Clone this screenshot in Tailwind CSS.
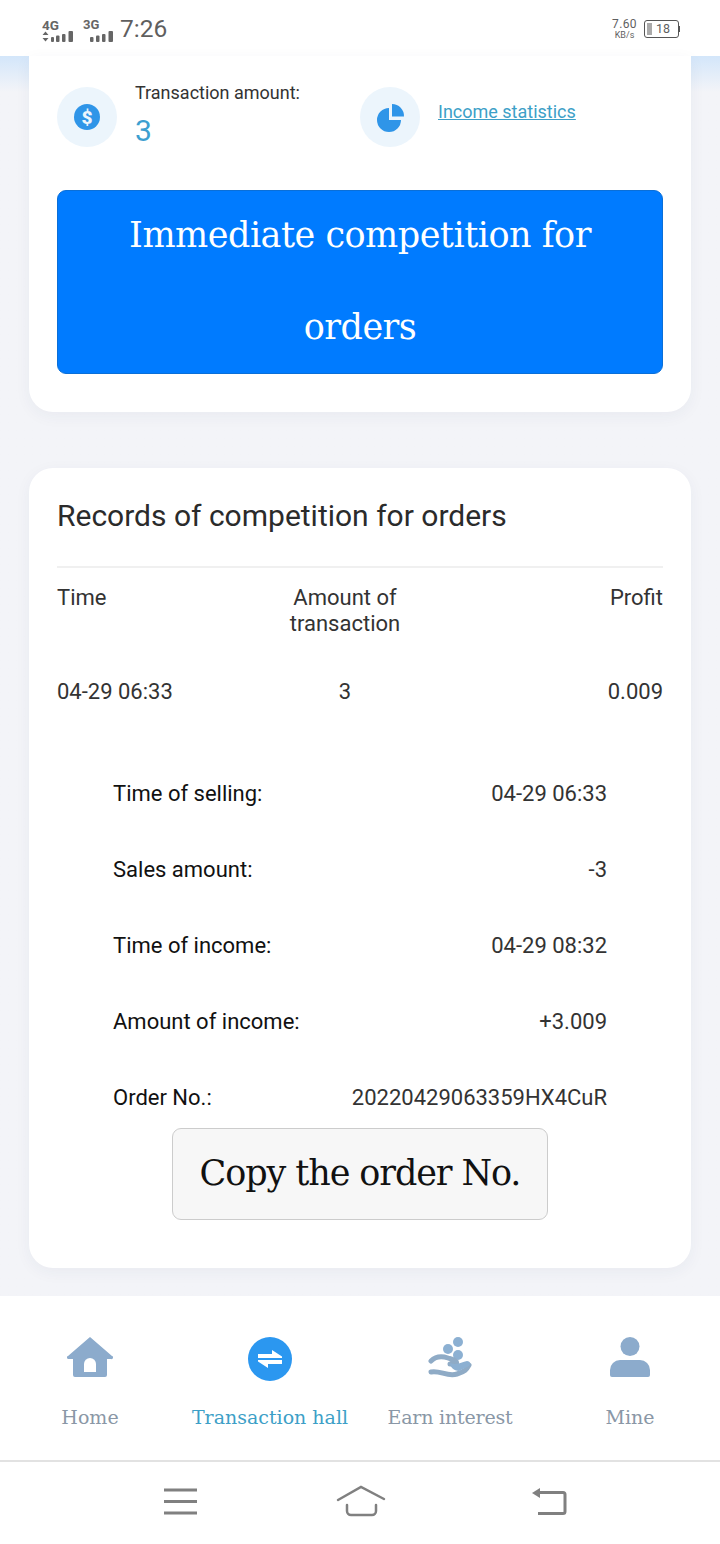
<!DOCTYPE html>
<html lang="en">
<head>
  <meta charset="UTF-8">
  <meta name="viewport" content="width=device-width, initial-scale=1.0">
  <title>Transaction hall</title>
  <script src="https://cdn.jsdelivr.net/npm/@tailwindcss/browser@4"></script>
</head>
<body class="w-[720px] h-[1544px] overflow-hidden bg-[#f3f4f8] font-['Roboto',sans-serif] text-[#222]">
  <!-- status bar -->
  <div class="h-[56px] bg-white flex items-center justify-between pl-[42px] pr-[40px] text-[#5f5f5f]">
    <div class="flex items-center">
      <svg width="32" height="32" viewBox="0 -8 32 32" fill="#666">
        <text x="0" y="10" font-size="13.500" font-weight="700" font-family="Roboto">4G</text>
        <path d="M3.500 11.500l3 3.500h-6zM3.500 21.500l3-3.500h-6z"/>
        <rect x="9" y="17" width="3" height="5" rx="1"/><rect x="14" y="15.500" width="3.500" height="6.500" rx="1"/><rect x="20" y="14" width="3.500" height="8" rx="1"/><rect x="26.500" y="11" width="4.500" height="11" rx="1"/>
      </svg>
      <svg width="32" height="32" viewBox="0 -8 32 32" fill="#666" class="ml-[8px]">
        <text x="1" y="9" font-size="13" font-weight="700" font-family="Roboto">3G</text>
        <rect x="8" y="17" width="3.500" height="5" rx="1"/><rect x="14" y="15.500" width="3.500" height="6.500" rx="1"/><rect x="20" y="14" width="3.500" height="8" rx="1"/><rect x="26.500" y="11" width="4.500" height="11" rx="1"/>
      </svg>
      <span class="text-[24.500px] leading-none ml-[6px] mt-[2px]">7:26</span>
    </div>
    <div class="flex items-center gap-[7px] mt-[2px]">
      <div class="flex flex-col items-center leading-none">
        <span class="text-[12px] tracking-[0.4px] leading-[12px]">7.60</span>
        <span class="text-[9px] leading-[9px] mt-[1px]">KB/s</span>
      </div>
      <div class="flex items-center">
        <div class="w-[35px] h-[18px] border-[1.5px] border-[#555] rounded-[3px] flex items-center text-[12.500px] pl-[2px] gap-[4px]">
          <span class="w-[5px] h-[12px] bg-[#aaa]"></span><span>18</span>
        </div>
        <span class="w-[1px] h-[6px] bg-[#555]"></span>
      </div>
    </div>
  </div>

  <main class="h-[1240px] px-[29px] bg-gradient-to-b from-[#d3e6fa] via-[#f3f4f8] via-[36px] to-[#f3f4f8]">
    <!-- summary card -->
    <section class="h-[356px] bg-white rounded-b-[24px] shadow-[0_4px_16px_rgba(40,60,100,0.05)] px-[28px] pt-[31px]">
      <div class="flex h-[60px]">
        <div class="w-[303px] flex gap-[18px]">
          <div class="w-[60px] h-[60px] rounded-full bg-[#ecf5fc] flex items-center justify-center">
            <svg width="26" height="26" viewBox="0 0 26 26">
              <circle cx="13" cy="13" r="13" fill="#2f95e8"/>
              <text x="13" y="20" text-anchor="middle" font-size="19" font-weight="900" fill="#ecf5fc" font-family="Roboto">$</text>
            </svg>
          </div>
          <div class="-mt-[7px]">
            <p class="text-[18px] leading-[26px] text-[#333]">Transaction amount:</p>
            <p class="text-[30px] leading-[36px] text-[#3d9fd0] mt-[7px]">3</p>
          </div>
        </div>
        <div class="flex gap-[18px] items-center">
          <div class="w-[60px] h-[60px] rounded-full bg-[#ecf5fc] flex items-center justify-center">
            <svg width="30" height="30" viewBox="0 0 30 30" fill="#2f95e8">
              <path d="M14 6a12 12 0 1 0 12 12H14z"/>
              <path d="M17 2a12 12 0 0 1 12 12.500H17z"/>
            </svg>
          </div>
          <a class="text-[18px] leading-[26px] underline text-[#3d9fc7] -mt-[11px]">Income statistics</a>
        </div>
      </div>
      <button class="mt-[43px] w-[606px] h-[184px] px-[24px] bg-[#007bff] border border-[#0a6fd8] rounded-[9px] text-white font-['DejaVu_Serif',serif] text-[35px] tracking-[-0.5px] leading-[92px]"><span class="block -mt-[2px]">Immediate competition for orders</span></button>
    </section>

    <!-- records card -->
    <section class="mt-[56px] h-[800px] bg-white rounded-[24px] shadow-[0_4px_16px_rgba(40,60,100,0.05)] px-[28px]">
      <h2 class="h-[100px] border-b-2 border-[#f0f0f0] text-[30px] leading-[95px] text-[#2b2b2b]">Records of competition for orders</h2>
      <div class="grid grid-cols-[208px_160px_1fr] text-[22px] leading-[26px] text-[#333] pt-[17px]">
        <span>Time</span>
        <span class="text-center">Amount of transaction</span>
        <span class="text-right">Profit</span>
      </div>
      <div class="grid grid-cols-[208px_160px_1fr] text-[22px] leading-[26px] text-[#333] mt-[42px]">
        <span>04-29 06:33</span>
        <span class="text-center">3</span>
        <span class="text-right">0.009</span>
      </div>
      <dl class="mt-[76px] px-[56px] text-[22px] leading-[26px] flex flex-col gap-[50px]">
        <div class="flex justify-between"><dt class="text-[#111]">Time of selling:</dt><dd class="text-[#333]">04-29 06:33</dd></div>
        <div class="flex justify-between"><dt class="text-[#111]">Sales amount:</dt><dd class="text-[#333]">-3</dd></div>
        <div class="flex justify-between"><dt class="text-[#111]">Time of income:</dt><dd class="text-[#333]">04-29 08:32</dd></div>
        <div class="flex justify-between"><dt class="text-[#111]">Amount of income:</dt><dd class="text-[#333]">+3.009</dd></div>
        <div class="flex justify-between"><dt class="text-[#111]">Order No.:</dt><dd class="text-[#333]">20220429063359HX4CuR</dd></div>
      </dl>
      <div class="flex justify-center mt-[17px]">
        <button class="w-[376px] h-[92px] pb-[2px] bg-[#f7f7f7] border border-[#ccc] rounded-[9px] font-['DejaVu_Serif',serif] text-[35px] tracking-[-1.1px] text-[#111]">Copy the order No.</button>
      </div>
    </section>
  </main>

  <!-- tab bar -->
  <nav class="h-[164px] bg-white grid grid-cols-4 pt-[41px] font-['DejaVu_Serif',serif] text-[19px] text-[#8a97a6]">
    <div class="flex flex-col items-center">
      <div class="h-[44px]">
        <svg width="46" height="42" viewBox="0 0 46 42" fill="#8cabcc">
          <path d="M23 0L45 19a1.500 1.500 0 0 1-1 3h-4v16a2 2 0 0 1-2 2H8a2 2 0 0 1-2-2V22H2a1.500 1.500 0 0 1-1-3z"/>
          <path d="M17 35v-8a5 5 0 0 1 12 0v8z" fill="#fff"/>
        </svg>
      </div>
      <span class="mt-[22px] leading-[28px]">Home</span>
    </div>
    <div class="flex flex-col items-center text-[#3d9fc7]">
      <div class="h-[44px]">
        <svg width="44" height="44" viewBox="0 0 44 44">
          <circle cx="22" cy="22" r="22" fill="#2b97f0"/>
          <path d="M10 17h14v-4l10 6.500v1.500H10zM34 27H20v4l-10-6.500V23h24z" fill="#fff"/>
        </svg>
      </div>
      <span class="mt-[22px] leading-[28px] whitespace-nowrap">Transaction hall</span>
    </div>
    <div class="flex flex-col items-center">
      <div class="h-[44px] -mt-[1px] mb-[1px]">
        <svg width="45" height="44" viewBox="0 0 45 44" fill="#8cb0d2">
          <circle cx="30" cy="6" r="5"/><circle cx="20" cy="13" r="5"/><circle cx="30" cy="19" r="5"/>
          <path d="M3 25C8 20 14 20 20 22s10 3 8 6h-6" fill="none" stroke="#8fabc6" stroke-width="5" stroke-linecap="round"/>
          <path d="M3 36c9-2 16 5 26 2s10-6 12-9" fill="none" stroke="#8fabc6" stroke-width="5" stroke-linecap="round"/>
          <path d="M22 27c6 3 12-1 17-2 3 0 4 3 2 5l-10 5c-5 0-9-4-9-8z"/>
        </svg>
      </div>
      <span class="mt-[22px] leading-[28px] whitespace-nowrap tracking-[-0.2px]">Earn interest</span>
    </div>
    <div class="flex flex-col items-center">
      <div class="h-[44px]">
        <svg width="40" height="40" viewBox="0 0 40 40" fill="#8cabcc">
          <circle cx="20" cy="9.500" r="9.500"/>
          <path d="M10 23h20a10 10 0 0 1 10 10v5a2 2 0 0 1-2 2H2a2 2 0 0 1-2-2v-5a10 10 0 0 1 10-10z"/>
        </svg>
      </div>
      <span class="mt-[22px] leading-[28px]">Mine</span>
    </div>
  </nav>

  <!-- system nav -->
  <div class="h-[84px] bg-white border-t-2 border-[#e2e2e2] flex items-start pl-[163px] pt-[23px]">
    <svg width="34" height="32" viewBox="0 0 34 32" stroke="#808080" stroke-width="3" fill="none">
      <path d="M1 5h33M1 16.500h33M1 28h33"/>
    </svg>
    <svg width="50" height="32" viewBox="0 0 50 32" stroke="#808080" stroke-width="2.500" fill="none" stroke-linecap="round" class="ml-[139px]">
      <path d="M2 15L25 2l23 12"/><path d="M11 20v6a4 4 0 0 0 4 4h21a4 4 0 0 0 4-4v-6"/>
    </svg>
    <svg width="36" height="32" viewBox="0 0 36 32" fill="none" class="ml-[145px]">
      <path d="M8 7.500h24a2 2 0 0 1 2 2v17a2 2 0 0 1-2 2H7" stroke="#808080" stroke-width="3"/>
      <path d="M1 8L9 3v10z" fill="#808080"/>
    </svg>
  </div>
</body>
</html>
